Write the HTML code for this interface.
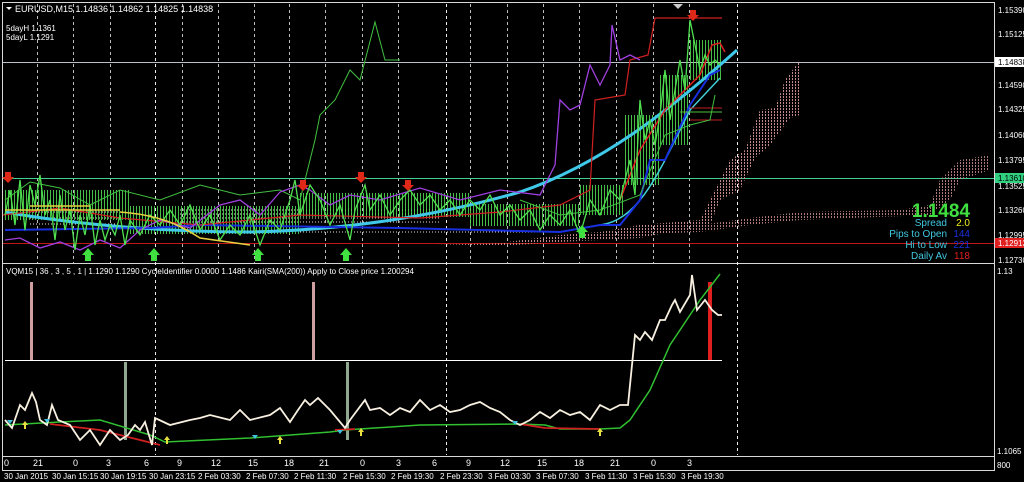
<!DOCTYPE html>
<html><head><style>
html,body{margin:0;padding:0;background:#000;width:1024px;height:482px;overflow:hidden}
svg{display:block}
text{font-family:"Liberation Sans",sans-serif}
</style></head><body>
<svg width="1024" height="482" viewBox="0 0 1024 482" xmlns="http://www.w3.org/2000/svg">
<defs>
<pattern id="dots" width="3" height="3" patternUnits="userSpaceOnUse"><rect width="1" height="2" fill="#c08888"/></pattern>
</defs>
<rect width="1024" height="482" fill="#000"/>
<g stroke="#d8d8d8" stroke-width="1" fill="none">
<path d="M2.5 2.5H994.5V470.5H2.5Z"/>
<path d="M2.5 263.5H994.5"/>
<path d="M2.5 456.5H994.5"/>
</g>
<g stroke="#bbb" stroke-width="1" stroke-dasharray="3,3">
<path d="M37.5 4V263M73.5 4V263M110.5 4V263M182.5 4V263M218.5 4V263M254.5 4V263M289.5 4V263M325.5 4V263M362.5 4V263M398.5 4V263M470.5 4V263M507.5 4V263M543.5 4V263M579.5 4V263M616.5 4V263M653.5 4V263M689.5 4V263"/>
<path d="M155.5 4V455M446.5 4V455M737.5 4V455" stroke="#eee"/>
</g>
<path d="M3 62.5H994" stroke="#b8c0c8"/>
<path d="M3 178.5H994" stroke="#40d090"/>
<path d="M3 243.5H994" stroke="#c01818"/>
<!-- cloud -->
<path d="M435 245L500 243L560 235L600 232L640 225L700 220L710 200L730 160L745 150L760 110L775 108L785 80L800 60L800 115L790 118L770 145L755 158L740 190L720 200L710 225L680 230L640 238L600 240L560 242L500 246Z" fill="url(#dots)"/>
<path d="M650 228L700 225L750 218L800 212L900 210L930 205L940 180L950 170L960 160L990 155L990 170L960 180L950 200L930 215L800 220L750 225L700 232L650 234Z" fill="url(#dots)" opacity="0.9"/>
<g fill="none" stroke="#e8e0e0" stroke-width="1" stroke-dasharray="1,2">
<path d="M180 210H440M180 214H440M180 218H440M180 222H440M30 212H120M30 218H120M30 224H120M300 232H560"/>
</g>
<!-- candle bar texture -->
<g stroke="#50e050" stroke-dasharray="1,2" fill="none" opacity="0.85">
<path d="M5 205H130" stroke-width="30"/>
<path d="M130 220H300" stroke-width="28"/>
<path d="M300 205H470" stroke-width="24"/>
<path d="M470 215H580" stroke-width="22"/>
<path d="M580 200H625" stroke-width="30"/>
<path d="M625 150H660" stroke-width="70"/>
<path d="M660 110H690" stroke-width="70"/>
<path d="M690 60H722" stroke-width="40"/>
</g>
<path d="M5 212C60 222 150 232 250 232C350 230 440 215 520 192C600 165 670 110 737 50" stroke="#40c8e8" stroke-width="3" fill="none"/>
<path d="M600 225C640 220 660 170 690 110L720 78" stroke="#40d0d8" stroke-width="1.5" fill="none"/>
<path d="M5 230L150 228L200 225L400 228L560 232L600 225L620 225L640 200L650 160L665 160L690 105L710 75L720 70" stroke="#1830e0" stroke-width="2" fill="none"/>
<path d="M690 120H722M690 108H722" stroke="#c02020" stroke-width="1"/>
<path d="M680 112H722" stroke="#50c040"/>
<path d="M3 215L60 208L120 218L200 225L300 215L420 218L500 212L560 205L590 190L595 100L625 95L630 60L648 55L655 18L722 18" stroke="#d02020" stroke-width="1.2" fill="none"/>
<path d="M620 200L640 150L665 110L685 90L700 75L712 45L720 43L725 52" stroke="#e02020" stroke-width="1.5" fill="none"/>
<path d="M5 200L30 182L60 188L90 205L120 190L160 200L200 185L240 195L280 190L300 200L315 140L320 115L335 100L350 70L360 80L375 22L385 60L400 60M520 200L560 215L600 210L640 195L665 135L690 125L710 120L715 95" stroke="#40c040" stroke-width="1" fill="none"/>
<path d="M5 240L20 238L40 248L60 242L80 250L100 240L120 248L140 230L160 220L190 228L220 205L240 200L260 215L280 192L300 185L310 190L330 205L350 195L380 200L420 188L460 200L500 190L540 195L555 165L560 100L570 110L580 105L590 65L600 85L610 65L612 25L620 60L630 55L640 60" stroke="#a040e0" stroke-width="1.3" fill="none"/>
<path d="M5 215L10 190L15 225L20 180L25 230L30 185L35 205L40 175L45 215L50 200L55 240L60 195L65 230L70 210L75 250L80 215L85 235L90 205L95 245L100 220L105 240L110 225L115 235L120 215L125 245L130 220L140 235L150 215L160 225L170 210L180 225L190 205L200 230L210 215L220 240L230 225L240 235L250 215L260 245L270 220L280 230L290 200L295 180L300 215L310 185L320 200L330 225L340 205L350 240L355 210L365 185L370 210L380 195L390 215L400 200L410 190L420 205L430 195L440 210L450 200L460 215L470 200L480 210L490 195L500 215L510 205L520 220L530 210L540 230L550 215L560 225L570 210L580 235L590 200L600 215L610 190L620 200L630 160L635 195L640 100L645 140L650 120L655 145L660 115L665 70L670 120L680 60L685 90L690 20L695 45L700 70L705 55L710 65L715 60L720 65" stroke="#50e050" stroke-width="1.3" fill="none"/>
<path d="M5 210H120M30 206H90" stroke="#e8d040" stroke-width="1.5"/>
<path d="M120 212C160 215 180 225 200 238L250 245" stroke="#e8d040" stroke-width="1.5" fill="none"/>
<g fill="#e02818">
<path d="M5 172h6v5h3l-6 6-6-6h3z"/><path d="M300 180h6v5h3l-6 6-6-6h3z"/><path d="M358 172h6v5h3l-6 6-6-6h3z"/><path d="M405 180h6v5h3l-6 6-6-6h3z"/><path d="M690 10h6v5h3l-6 6-6-6h3z"/>
</g>
<g fill="#40e040">
<path d="M82 255l6-7 6 7h-3v6h-6v-6z"/><path d="M148 255l6-7 6 7h-3v6h-6v-6z"/><path d="M252 255l6-7 6 7h-3v6h-6v-6z"/><path d="M340 255l6-7 6 7h-3v6h-6v-6z"/><path d="M576 232l6-7 6 7h-3v6h-6v-6z"/>
</g>
<path d="M673 4l5 5 5-5z" fill="#ccc"/>
<path d="M6 7l3 3 3-3z" fill="#fff"/>
<text x="15" y="12" fill="#fff" font-size="9">EURUSD,M15  1.14836 1.14862 1.14825 1.14838</text>
<text x="6" y="31" fill="#fff" font-size="8">5dayH 1.1361</text>
<text x="6" y="40" fill="#fff" font-size="8">5dayL 1.1291</text>
<text x="970" y="217" fill="#40e040" font-size="19" font-weight="bold" text-anchor="end">1.1484</text>
<g font-size="10" text-anchor="end">
<text x="947" y="226" fill="#40c8e0">Spread</text><text x="970" y="226" fill="#f0f020">2.0</text>
<text x="947" y="237" fill="#40c8e0">Pips to Open</text><text x="970" y="237" fill="#1830e0">144</text>
<text x="947" y="248" fill="#40c8e0">Hi to Low</text><text x="970" y="248" fill="#1830e0">221</text>
<text x="947" y="259" fill="#40c8e0">Daily Av</text><text x="970" y="259" fill="#e02020">118</text>
</g>
<g fill="#fff" font-size="8">
<text x="998" y="13">1.15390</text><text x="998" y="37">1.15125</text>
<text x="998" y="88">1.14590</text><text x="998" y="112">1.14325</text><text x="998" y="138">1.14060</text>
<text x="998" y="163">1.13795</text><text x="998" y="189">1.13525</text><text x="998" y="213">1.13260</text>
<text x="998" y="238">1.12995</text><text x="998" y="263">1.12730</text>
<text x="997" y="274">1.13</text><text x="997" y="454">1.1065</text><text x="997" y="468">800</text>
</g>
<rect x="995" y="57" width="29" height="10" fill="#fff"/><text x="998" y="65" fill="#000" font-size="8">1.14838</text>
<rect x="995" y="173" width="29" height="10" fill="#30d080"/><text x="998" y="181" fill="#000" font-size="8">1.13610</text>
<rect x="995" y="238" width="29" height="10" fill="#e02020"/><text x="998" y="246" fill="#fff" font-size="8">1.12913</text>
<text x="6" y="274" fill="#fff" font-size="8">VQM15 |  36 , 3 , 5 , 1  |   1.1290 1.1290  CycleIdentifier 0.0000 1.1486  Kairi(SMA(200)) Apply to Close price 1.200294</text>
<path d="M5 360.5H722" stroke="#fff"/>
<path d="M31.5 282V360M313.5 282V360" stroke="#d0a0a0" stroke-width="3"/>
<path d="M125.5 362V440M347.5 362V440" stroke="#90a890" stroke-width="3"/>
<path d="M710 282V360" stroke="#e02020" stroke-width="4"/>
<path d="M5 425L60 422L100 420L150 435L165 442L250 438L330 432L345 430L420 425L520 424L545 425L560 429L600 429L620 428L630 420L650 390L670 345L700 300L720 274" stroke="#30c030" stroke-width="1.5" fill="none"/>
<path d="M50 424L100 430L140 440L160 445M520 424L545 428L600 429M335 430L355 429" stroke="#d02020" stroke-width="1.8" fill="none"/>
<path d="M5 420L12 428L20 405L25 410L32 393L36 402L40 420L47 425L52 405L58 420L70 425L80 440L90 430L100 445L110 430L120 440L128 435L135 425L140 430L145 422L152 445L155 418L170 425L190 420L200 418L210 415L230 420L240 410L250 420L270 415L280 408L290 422L298 410L305 400L310 405L318 398L330 410L345 428L350 420L365 400L370 410L380 408L390 415L400 408L410 412L420 400L430 410L440 405L450 412L460 410L470 405L480 402L490 408L500 412L510 420L520 425L530 420L540 412L550 418L560 410L570 415L580 412L590 420L600 405L610 410L620 405L628 405L635 335L640 340L645 332L652 340L660 320L665 320L672 305L675 300L680 312L690 295L692 275L697 310L705 300L712 310L718 315L722 315" stroke="#f8f0e0" stroke-width="1.8" fill="none"/>
<g fill="#e8e040"><path d="M22 425l3-4 3 4h-2v4h-2v-4z"/><path d="M164 440l3-4 3 4h-2v4h-2v-4z"/><path d="M277 440l3-4 3 4h-2v4h-2v-4z"/><path d="M358 432l3-4 3 4h-2v4h-2v-4z"/><path d="M597 432l3-4 3 4h-2v4h-2v-4z"/></g>
<g fill="#40c0e0"><path d="M7 420l3 4 3-4z"/><path d="M44 419l3 4 3-4z"/><path d="M252 435l3 4 3-4z"/><path d="M337 430l3 4 3-4z"/><path d="M512 421l3 4 3-4z"/></g>
<g fill="#fff" font-size="9">
<text x="4" y="466">0</text><text x="33" y="466">21</text><text x="73" y="466">0</text><text x="106" y="466">3</text><text x="144" y="466">6</text>
<text x="177" y="466">9</text><text x="211" y="466">12</text><text x="248" y="466">15</text><text x="284" y="466">18</text><text x="319" y="466">21</text>
<text x="360" y="466">0</text><text x="396" y="466">3</text><text x="432" y="466">6</text><text x="466" y="466">9</text><text x="500" y="466">12</text>
<text x="537" y="466">15</text><text x="574" y="466">18</text><text x="610" y="466">21</text><text x="651" y="466">0</text><text x="687" y="466">3</text>
</g>
<g fill="#fff" font-size="8">
<text x="4" y="479">30 Jan 2015</text><text x="52" y="479">30 Jan 15:15</text><text x="100" y="479">30 Jan 19:15</text><text x="149" y="479">30 Jan 23:15</text>
<text x="198" y="479">2 Feb 03:30</text><text x="246" y="479">2 Feb 07:30</text><text x="294" y="479">2 Feb 11:30</text><text x="343" y="479">2 Feb 15:30</text>
<text x="391" y="479">2 Feb 19:30</text><text x="440" y="479">2 Feb 23:30</text><text x="488" y="479">3 Feb 03:30</text><text x="536" y="479">3 Feb 07:30</text>
<text x="585" y="479">3 Feb 11:30</text><text x="633" y="479">3 Feb 15:30</text><text x="681" y="479">3 Feb 19:30</text>
</g>
</svg>
</body></html>
